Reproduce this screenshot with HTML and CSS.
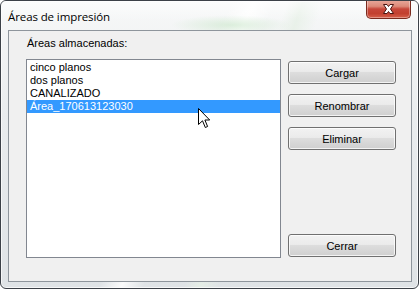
FILE: index.html
```html
<!DOCTYPE html>
<html lang="es">
<head>
<meta charset="utf-8">
<title>Áreas de impresión</title>
<link rel="stylesheet" href="styles.css">
</head>
<body>
<div class="window">
  <div class="titlebar">
    <span class="title">Áreas de impresión</span>
    <button class="close" aria-label="Cerrar">
      <svg width="45" height="19" viewBox="0 0 45 19">
        <path d="M17.5 4.5 L21 4.5 L22.5 6.5 L24 4.5 L27.5 4.5 L24.5 9 L27.5 13.5 L24 13.5 L22.5 11.5 L21 13.5 L17.5 13.5 L20.5 9 Z" fill="#fff" stroke="#4b1410" stroke-width="1" stroke-linejoin="round"/>
      </svg>
    </button>
  </div>
  <div class="client">
    <div class="label">Áreas almacenadas:</div>
    <div class="content">
      <ul class="listbox">
        <li>cinco planos</li>
        <li>dos planos</li>
        <li>CANALIZADO</li>
        <li class="selected">Área_170613123030</li>
      </ul>
      <div class="actions">
        <button class="btn">Cargar</button>
        <button class="btn">Renombrar</button>
        <button class="btn">Eliminar</button>
        <button class="btn btn-close">Cerrar</button>
      </div>
    </div>
  </div>
  <svg class="cursor" width="13" height="21" viewBox="0 0 13 21">
    <path d="M0.5 0.5 L0.5 16.5 L4.5 12.8 L7.3 19.5 L9.6 18.5 L6.9 12 L11.7 12 Z" fill="#fff" stroke="#000" stroke-width="1" stroke-linejoin="miter"/>
  </svg>
</div>
</body>
</html>
```
FILE: styles.css
```css
html, body {
  margin: 0;
  padding: 0;
  background: #ffffff;
}

.window {
  position: relative;
  width: 419px;
  height: 289px;
  box-sizing: border-box;
  border: 1px solid #3c4148;
  border-radius: 6px;
  background:
    linear-gradient(115deg, transparent 42%, rgba(255,255,255,0.85) 46%, transparent 50%),
    linear-gradient(110deg, transparent 55%, rgba(230,240,230,0.8) 58%, transparent 62%),
    linear-gradient(180deg, #f7f8f8 0%, #e9ecee 40%, #dfe3e6 100%);
  box-shadow: inset 0 0 0 1px rgba(255,255,255,0.7);
  overflow: hidden;
  font-family: "Liberation Sans", Arial, sans-serif;
}

.titlebar {
  height: 29px;
  display: flex;
  align-items: center;
  padding-left: 7px;
  background: linear-gradient(180deg, rgba(255,255,255,0.6), rgba(255,255,255,0) 70%),
    radial-gradient(ellipse 60px 10px at 230px 24px, rgba(200,230,200,0.6), transparent);
}

.title {
  font-family: "Open Sans", "Noto Sans", sans-serif;
  font-size: 11.5px;
  color: #000;
  letter-spacing: -0.1px;
  margin-top: 1px;
}

.close {
  margin-left: auto;
  margin-right: 7px;
  align-self: flex-start;
  margin-top: -1px;
  width: 45px;
  height: 19px;
  padding: 0;
  border: 1px solid #7a2a1e;
  border-top: none;
  border-radius: 0 0 5px 5px;
  background: linear-gradient(180deg, #e9a99c 0%, #dd8a79 35%, #c7473a 50%, #c2402f 75%, #d7604b 100%);
  box-shadow: inset 0 0 0 1px rgba(255,255,255,0.35);
  box-sizing: border-box;
  display: flex;
  align-items: center;
  justify-content: center;
  overflow: hidden;
}

.close svg {
  display: block;
  flex: none;
}

.client {
  margin: 0 6px 0 7px;
  height: 252px;
  box-sizing: border-box;
  border: 1px solid #8e959c;
  background: #f0f0f0;
  padding: 6px 0 0 17px;
}

.label {
  font-size: 11px;
  line-height: 13px;
  color: #000;
  padding-left: 1px;
}

.content {
  display: flex;
  gap: 7px;
  margin-top: 9px;
}

.listbox {
  list-style: none;
  margin: 0;
  width: 255px;
  height: 199px;
  box-sizing: border-box;
  border: 1px solid #828790;
  background: #fff;
  padding: 1px 0 0 0;
}

.listbox li {
  font-size: 11px;
  line-height: 13px;
  height: 13px;
  padding-left: 3px;
  color: #000;
  white-space: nowrap;
}

.listbox li.selected {
  background: #3399ff;
  color: #fff;
}

.actions {
  width: 108px;
  display: flex;
  flex-direction: column;
  gap: 10px;
  padding-top: 2px;
  padding-bottom: 1px;
  box-sizing: border-box;
  height: 199px;
}

.btn {
  height: 23px;
  width: 108px;
  box-sizing: border-box;
  border: 1px solid #707070;
  border-radius: 3px;
  background: linear-gradient(180deg, #f2f2f2 0%, #ebebeb 45%, #dddddd 50%, #cfcfcf 100%);
  box-shadow: inset 0 0 0 1px rgba(255,255,255,0.75);
  font-family: "Liberation Sans", Arial, sans-serif;
  font-size: 11px;
  color: #000;
  padding: 0;
}

.btn-close {
  margin-top: auto;
}

.cursor {
  position: absolute;
  left: 197px;
  top: 107px;
}
```
